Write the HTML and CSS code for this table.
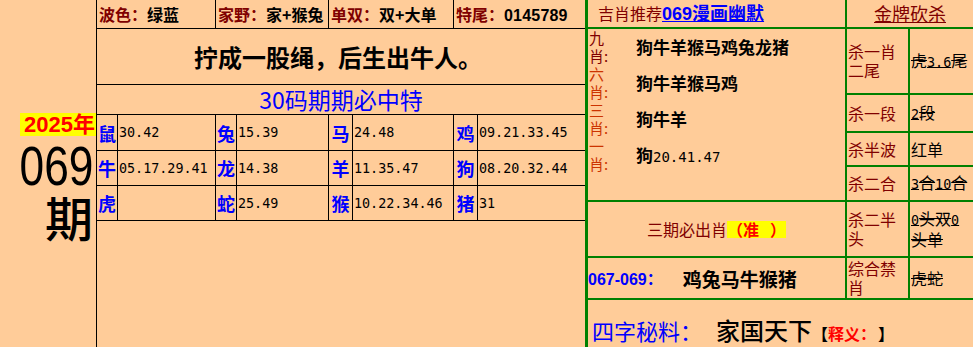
FILE: index.html
```html
<!DOCTYPE html>
<html lang="zh">
<head>
<meta charset="utf-8">
<title>069期</title>
<link rel="stylesheet" href="styles.css">
</head>
<body>
<div class="page">
  <div class="issue">
    <div class="year">2025年</div>
    <div class="num"><span>069</span></div>
    <div class="qi">期</div>
  </div>

  <div class="mid">
    <div class="info span2"><span class="lab">波色：</span>绿蓝</div>
    <div class="info span2"><span class="lab">家野：</span>家+猴兔</div>
    <div class="info span2"><span class="lab">单双：</span>双+大单</div>
    <div class="info span2"><span class="lab">特尾：</span><span class="tail">0145789</span></div>
    <div class="motto span8">拧成一股绳，后生出牛人。</div>
    <div class="title30 span8">30码期期必中特</div>

    <div class="zx">鼠</div><div class="nums">30.42</div>
    <div class="zx">兔</div><div class="nums">15.39</div>
    <div class="zx">马</div><div class="nums">24.48</div>
    <div class="zx">鸡</div><div class="nums">09.21.33.45</div>

    <div class="zx">牛</div><div class="nums">05.17.29.41</div>
    <div class="zx">龙</div><div class="nums">14.38</div>
    <div class="zx">羊</div><div class="nums">11.35.47</div>
    <div class="zx">狗</div><div class="nums">08.20.32.44</div>

    <div class="zx">虎</div><div class="nums"></div>
    <div class="zx">蛇</div><div class="nums">25.49</div>
    <div class="zx">猴</div><div class="nums">10.22.34.46</div>
    <div class="zx">猪</div><div class="nums">31</div>

    <div class="blank span8"></div>
  </div>

  <div class="right">
    <div class="head"><span class="headlab">吉肖推荐</span><a class="headlink" href="#">069漫画幽默</a></div>
    <div class="gold span2"><span>金牌砍杀</span></div>

    <div class="tips">
      <div class="tlabels">
        <div class="tl dark">九</div><div class="tl dark">肖:</div>
        <div class="tl">六</div><div class="tl">肖:</div>
        <div class="tl">三</div><div class="tl">肖:</div>
        <div class="tl">一</div><div class="tl">肖:</div>
      </div>
      <div class="tvals">
        <div class="tv">狗牛羊猴马鸡兔龙猪</div>
        <div class="tv">狗牛羊猴马鸡</div>
        <div class="tv">狗牛羊</div>
        <div class="tv">狗<span class="mono">20.41.47</span></div>
      </div>
    </div>

    <div class="klab">杀一肖二尾</div><div class="kval"><s>虎<span class="mono">3.6</span>尾</s></div>
    <div class="klab">杀一段</div><div class="kval"><s><span class="mono">2</span>段</s></div>
    <div class="klab">杀半波</div><div class="kval">红单</div>
    <div class="klab">杀二合</div><div class="kval"><s><span class="mono">3</span>合<span class="mono">10</span>合</s></div>

    <div class="sanqi">三期必出肖<span class="zhun">（准&nbsp;&nbsp;&nbsp;）</span></div>
    <div class="klab">杀二半头</div><div class="kval"><s><span class="mono">0</span>头双<span class="mono">0</span>头单</s></div>

    <div class="range"><span class="rg">067-069：</span><span class="rv">鸡兔马牛猴猪</span></div>
    <div class="klab">综合禁肖</div><div class="kval"><s>虎蛇</s></div>

    <div class="secret span3"><span class="sk">四字秘料：</span><span class="sv">家国天下</span><span class="br">【</span><span class="sy">释义：</span><span class="br close">】</span></div>
  </div>
</div>
</body>
</html>
```

FILE: styles.css
```css
html, body {
  margin: 0;
  padding: 0;
  background: #FFCC99;
}

body {
  font-family: "Noto Sans CJK SC", "Liberation Sans", sans-serif;
  color: #000;
}

.page {
  display: flex;
  width: 973px;
  height: 347px;
  overflow: hidden;
  background: #FFCC99;
}

/* ---------- issue column ---------- */
.issue {
  width: 96px;
  flex: none;
  display: flex;
  flex-direction: column;
  align-items: flex-end;
  justify-content: center;
  padding-top: 5px;
  box-sizing: border-box;
}

.year {
  background: #FFFF00;
  color: #FF0000;
  font-family: "Liberation Sans", "Noto Sans CJK SC", sans-serif;
  font-weight: bold;
  font-size: 22px;
  line-height: 23px;
  padding: 0 1px 0 4px;
  margin-bottom: 6px;
}

.num {
  font-family: "Liberation Sans", sans-serif;
  font-size: 56px;
  line-height: 48px;
  height: 48px;
  padding-right: 3px;
  margin-bottom: 2px;
}

.num span {
  display: inline-block;
  transform: scaleX(0.79);
  transform-origin: right center;
}

.qi {
  font-size: 48px;
  line-height: 48px;
  font-weight: 500;
  padding-right: 3px;
}

/* ---------- middle table ---------- */
.mid {
  width: 489px;
  flex: none;
  box-sizing: border-box;
  border-left: 1px solid #000;
  background: #000;
  display: grid;
  grid-template-columns: 20px 97px 20px 91px 23px 100px 23px 107px;
  grid-template-rows: 28px 55px 29px 35px 34px 34px 1fr;
  gap: 1px;
}

.mid > div {
  background: #FFCC99;
}

.span2 { grid-column: span 2; }
.span3 { grid-column: span 3; }
.span8 { grid-column: span 8; }

.info {
  font-size: 16px;
  font-weight: bold;
  line-height: 28px;
  padding-left: 2px;
  white-space: nowrap;
  overflow: hidden;
}

.lab {
  color: #800000;
}

.tail {
  font-family: "Liberation Sans", sans-serif;
  font-weight: bold;
  font-size: 16px;
  letter-spacing: 0.2px;
}

.motto {
  font-size: 24px;
  font-weight: bold;
  line-height: 55px;
  text-align: center;
  padding-right: 6px;
}

.title30 {
  color: #0000FF;
  font-size: 23px;
  line-height: 29px;
  text-align: center;
}

.zx {
  color: #0000FF;
  font-weight: bold;
  font-size: 18px;
  display: flex;
  align-items: center;
  justify-content: center;
}

.nums {
  font-family: "DejaVu Sans Mono", monospace;
  font-size: 13.4px;
  display: flex;
  align-items: center;
  padding-left: 1px;
}

/* ---------- right table ---------- */
.right {
  flex: none;
  width: 388px;
  box-sizing: border-box;
  border-left: 3px solid #008000;
  background: #008000;
  display: grid;
  grid-template-columns: 257px 61px 63px;
  grid-template-rows: 27px 64px 36px 32px 33px 54px 40px 1fr;
  gap: 2px;
}

.right > div {
  background: #FFCC99;
}

.head {
  line-height: 27px;
  padding-left: 10px;
  white-space: nowrap;
}

.headlab {
  color: #800000;
  font-size: 16px;
}

.headlink {
  color: #0000FF;
  font-family: "Liberation Sans", "Noto Sans CJK SC", sans-serif;
  font-weight: bold;
  font-size: 18px;
  text-decoration: underline;
}

.gold {
  display: flex;
  align-items: center;
  justify-content: center;
}

.gold span {
  color: #800000;
  font-size: 18px;
  text-decoration: underline;
  line-height: 27px;
}

.tips {
  grid-row: span 4;
  display: flex;
}

.tlabels {
  width: 24px;
  flex: none;
  font-size: 15px;
  line-height: 18px;
  color: #CC3300;
  padding-left: 1px;
}

.tl.dark {
  color: #800000;
}

.tvals {
  padding-left: 23px;
}

.tv {
  font-size: 17px;
  font-weight: bold;
  line-height: 36px;
  white-space: nowrap;
}

.mono {
  font-family: "DejaVu Sans Mono", monospace;
  font-weight: normal;
  font-size: 14px;
}

.klab {
  color: #800000;
  font-size: 16px;
  line-height: 19px;
  display: flex;
  align-items: center;
  padding-left: 1px;
}

.kval {
  font-size: 16px;
  line-height: 19px;
  display: flex;
  align-items: center;
  padding-left: 1px;
}

.kval s {
  text-decoration-thickness: 1px;
}

.kval .mono {
  font-size: 13.4px;
}

.sanqi {
  color: #800000;
  font-size: 16px;
  display: flex;
  align-items: center;
  justify-content: center;
}

.zhun {
  background: #FFFF00;
  color: #FF0000;
  font-weight: bold;
  line-height: 17px;
}

.range {
  display: flex;
  align-items: center;
  white-space: nowrap;
}

.rg {
  color: #0000FF;
  font-family: "Liberation Sans", "Noto Sans CJK SC", sans-serif;
  font-weight: bold;
  font-size: 16px;
}

.rv {
  margin-left: 20px;
  font-size: 19px;
  font-weight: bold;
}

.secret {
  padding: 14px 0 0 4px;
  white-space: nowrap;
  line-height: 32px;
}

.sk {
  color: #0000FF;
  font-size: 22px;
}

.sv {
  font-size: 24px;
  font-weight: 500;
  margin-left: 14px;
}

.br {
  font-size: 16px;
  font-weight: bold;
}

.br.close {
  margin-left: 10px;
}

.sy {
  color: #FF0000;
  font-size: 16px;
  font-weight: bold;
}
```
